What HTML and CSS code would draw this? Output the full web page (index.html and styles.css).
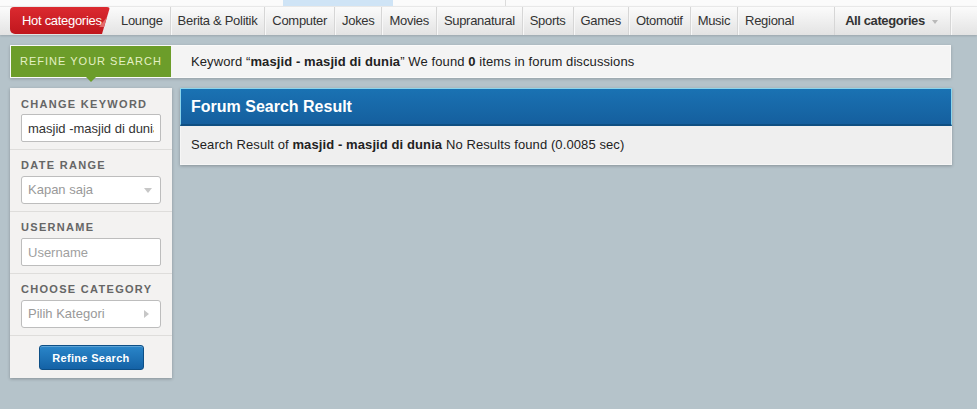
FILE: index.html
```html
<!DOCTYPE html>
<html lang="id">
<head>
    <meta charset="UTF-8">
    <title>Forum Search Result</title>
    <link rel="stylesheet" href="styles.css">
</head>
<body>

    <div class="top-strip">
        <span class="top-tab"></span>
        <span class="top-divider"></span>
    </div>

    <nav class="cat-nav">
        <ul class="cat-list">
            <li class="cat-hot"><a href="#">Hot categories</a></li>
            <li><a href="#">Lounge</a></li>
            <li><a href="#">Berita &amp; Politik</a></li>
            <li><a href="#">Computer</a></li>
            <li><a href="#">Jokes</a></li>
            <li><a href="#">Movies</a></li>
            <li><a href="#">Supranatural</a></li>
            <li><a href="#">Sports</a></li>
            <li><a href="#">Games</a></li>
            <li><a href="#">Otomotif</a></li>
            <li><a href="#">Music</a></li>
            <li class="cat-last"><a href="#">Regional</a></li>
            <li class="cat-all"><a href="#">All categories <span class="caret-down"></span></a></li>
        </ul>
    </nav>

    <div class="wrapper">
        <div class="refine-bar">
            <div class="refine-label">REFINE YOUR SEARCH</div>
            <p class="refine-summary">
                Keyword “<b>masjid - masjid di dunia</b>” We found <b>0</b> items in forum discussions
            </p>
        </div>

        <div class="content">
            <aside class="sidebar">
                <div class="side-section">
                    <label class="side-label">CHANGE KEYWORD</label>
                    <input class="side-input" type="text" value="masjid -masjid di dunia">
                </div>
                <div class="side-section">
                    <label class="side-label">DATE RANGE</label>
                    <div class="side-select">Kapan saja <span class="arrow-down"></span></div>
                </div>
                <div class="side-section">
                    <label class="side-label">USERNAME</label>
                    <input class="side-input" type="text" placeholder="Username">
                </div>
                <div class="side-section">
                    <label class="side-label">CHOOSE CATEGORY</label>
                    <div class="side-select">Pilih Kategori <span class="arrow-right"></span></div>
                </div>
                <div class="side-actions">
                    <button class="btn-refine">Refine Search</button>
                </div>
            </aside>

            <main class="result-panel">
                <h2 class="result-title">Forum Search Result</h2>
                <p class="result-body">
                    Search Result of <b>masjid - masjid di dunia</b> No Results found (0.0085 sec)
                </p>
            </main>
        </div>
    </div>

</body>
</html>
```

FILE: styles.css
```css
:root {
    --page-bg: #b5c3ca;
    --text-dark: #222222;
    --label-gray: #666666;
    --refine-green: #6c9d2a;
}

/* --- reset --- */
* {
    margin: 0;
    padding: 0;
    box-sizing: border-box;
}

body {
    font-family: 'Liberation Sans', Arial, sans-serif;
    font-size: 13px;
    color: var(--text-dark);
    background-color: var(--page-bg);
    min-height: 409px;
}

a {
    color: inherit;
    text-decoration: none;
}

/* --- top strip --- */
.top-strip {
    height: 6px;
    background-color: #fbfbfb;
    display: flex;
}
.top-tab {
    width: 110px;
    margin-left: 283px;
    background-color: #cfe4f6;
}
.top-divider {
    width: 1px;
    margin-left: 112px;
    background-color: #dcdcdc;
}

/* --- category nav --- */
.cat-nav {
    height: 29px;
    background: linear-gradient(#fbfbfb, #e3e3e3);
    border-top: 1px solid #e8e8e8;
    box-shadow: 0 1px 2px rgba(0,0,0,0.15);
}
.cat-list {
    list-style: none;
    display: flex;
    height: 100%;
    width: 951px;
    padding-left: 10px;
}
.cat-list li {
    flex-shrink: 0;
    white-space: nowrap;
    line-height: 28px;
    padding: 0 7px;
    letter-spacing: -0.3px;
    border-right: 1px solid #d6d6d6;
    box-shadow: 1px 0 0 #f8f8f8;
    color: #333;
}
.cat-list .cat-hot {
    position: relative;
    width: 100px;
    margin: 0 4px 1px 0;
    padding: 0 0 0 12px;
    line-height: 27px;
    border: none;
    box-shadow: none;
    color: #fff;
    background: linear-gradient(#db2a30, #c0161d);
    border-radius: 4px 3px 0 5px;
    clip-path: polygon(0 0, 100% 0, 92% 100%, 0 100%);
}
.cat-hot::after {
    content: '';
    position: absolute;
    right: 3px;
    top: 10px;
    border-style: solid;
    border-width: 0 0 10px 8px;
    border-color: transparent transparent #e46a6c transparent;
}
.cat-list .cat-last {
    border-right: none;
    box-shadow: none;
}
.cat-list .cat-all {
    margin-left: auto;
    padding: 0 12px 0 10px;
    border-left: 1px solid #d6d6d6;
    font-weight: 700;
    letter-spacing: -0.4px;
}
.caret-down {
    display: inline-block;
    margin-left: 4px;
    vertical-align: middle;
    border-style: solid;
    border-width: 4px 3px 0 3px;
    border-color: #b9b9b9 transparent transparent transparent;
}

/* --- page wrapper --- */
.wrapper {
    width: 942px;
    margin-left: 10px;
    padding-top: 10px;
}

/* --- refine bar --- */
.refine-bar {
    display: flex;
    height: 33px;
    width: 941px;
    background-color: #f4f4f4;
    border: 1px solid #fafafa;
    box-shadow: 0 1px 3px rgba(0,0,0,0.2);
}
.refine-label {
    position: relative;
    width: 160px;
    flex-shrink: 0;
    line-height: 31px;
    text-align: center;
    background-color: var(--refine-green);
    color: #e4f0c4;
    font-size: 11px;
    letter-spacing: 1px;
}
.refine-label::after {
    content: '';
    position: absolute;
    left: 75px;
    bottom: -5px;
    border-style: solid;
    border-width: 5px 5px 0 5px;
    border-color: var(--refine-green) transparent transparent transparent;
}
.refine-summary {
    line-height: 31px;
    padding-left: 20px;
    white-space: nowrap;
    letter-spacing: 0.1px;
}

/* --- content columns --- */
.content {
    display: flex;
    align-items: flex-start;
    gap: 8px;
    margin-top: 10px;
}

/* --- sidebar --- */
.sidebar {
    width: 162px;
    flex-shrink: 0;
    background-color: #f3f2f1;
    box-shadow: 0 1px 3px rgba(0,0,0,0.25);
}
.side-section {
    display: flex;
    flex-direction: column;
    height: 62px;
    padding: 9px 11px 0;
    border-bottom: 1px solid #dedddb;
}
.side-section:first-child {
    padding-top: 10px;
}
.side-label {
    font-size: 11px;
    line-height: 13px;
    font-weight: 700;
    letter-spacing: 1.3px;
    color: var(--label-gray);
    margin-bottom: 4px;
}
.side-section:first-child .side-label {
    margin-bottom: 3px;
}
.side-input,
.side-select {
    height: 28px;
    width: 140px;
    border: 1px solid #bdbdbd;
    border-radius: 2px;
    background-color: #fff;
    font-family: inherit;
    font-size: 13px;
    color: #333;
    padding: 0 6px;
    outline: none;
}
.side-input::placeholder {
    color: #a0a0a0;
}
.side-select {
    position: relative;
    line-height: 26px;
    border-radius: 3px;
    color: #999;
}
.arrow-down {
    position: absolute;
    right: 8px;
    top: 11px;
    border-style: solid;
    border-width: 5px 4px 0 4px;
    border-color: #c7c7c7 transparent transparent transparent;
}
.arrow-right {
    position: absolute;
    right: 11px;
    top: 9px;
    border-style: solid;
    border-width: 4px 0 4px 5px;
    border-color: transparent transparent transparent #c7c7c7;
}
.side-actions {
    text-align: center;
    padding: 9px 0 8px;
}
.btn-refine {
    display: block;
    margin: 0 auto;
    width: 105px;
    height: 25px;
    border: 1px solid #0d4f86;
    border-radius: 3px;
    background: linear-gradient(#2a86c9, #1462a6);
    color: #fff;
    font-family: inherit;
    font-size: 11px;
    font-weight: 700;
    letter-spacing: 0.3px;
    cursor: pointer;
    box-shadow: inset 0 1px 0 rgba(255,255,255,0.25);
}

/* --- result panel --- */
.result-panel {
    flex: 1;
    background-color: #efefef;
    border: 1px solid #f6f6f6;
    border-top: none;
    box-shadow: 0 1px 3px rgba(0,0,0,0.25);
}
.result-title {
    height: 38px;
    line-height: 35px;
    padding-left: 10px;
    background: linear-gradient(#1a72b3, #155f9e);
    border: 1px solid #8ad4ec;
    border-bottom: 2px solid #0f4f82;
    margin: 0 -1px;
    color: #fff;
    font-size: 16px;
    font-weight: 700;
}
.result-body {
    line-height: 38px;
    padding-left: 10px;
    white-space: nowrap;
    letter-spacing: 0.1px;
}
```
